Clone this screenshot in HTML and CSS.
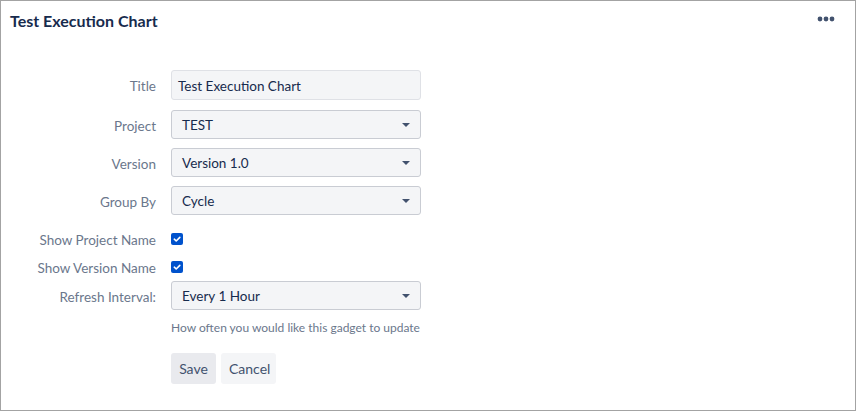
FILE: index.html
```html
<!DOCTYPE html>
<html>
<head>
<meta charset="utf-8">
<link rel="stylesheet" href="styles.css">
</head>
<body>
<div class="gadget">
  <div class="header">
    <h1 class="title">Test Execution Chart</h1>
    <svg class="more" width="18" height="6" viewBox="0 0 18 6"><circle cx="3" cy="3" r="2.4"/><circle cx="9" cy="3" r="2.4"/><circle cx="15" cy="3" r="2.4"/></svg>
  </div>
  <form class="form">
    <div class="row r-title">
      <label class="label">Title</label>
      <div class="field text-field">Test Execution Chart</div>
    </div>
    <div class="row r-sel">
      <label class="label">Project</label>
      <div class="field select">TEST<span class="caret"></span></div>
    </div>
    <div class="row r-sel">
      <label class="label">Version</label>
      <div class="field select">Version 1.0<span class="caret"></span></div>
    </div>
    <div class="row r-sel r-group">
      <label class="label">Group By</label>
      <div class="field select">Cycle<span class="caret"></span></div>
    </div>
    <div class="row r-check">
      <label class="label">Show Project Name</label>
      <span class="check"><svg width="12" height="12" viewBox="0 0 12 12"><path d="M3.3 6.2 L5.2 8 L8.8 4.4" fill="none" stroke="#fff" stroke-width="1.6" stroke-linecap="round" stroke-linejoin="round"/></svg></span>
    </div>
    <div class="row r-check r-check2">
      <label class="label">Show Version Name</label>
      <span class="check"><svg width="12" height="12" viewBox="0 0 12 12"><path d="M3.3 6.2 L5.2 8 L8.8 4.4" fill="none" stroke="#fff" stroke-width="1.6" stroke-linecap="round" stroke-linejoin="round"/></svg></span>
    </div>
    <div class="row r-sel r-refresh">
      <label class="label">Refresh Interval:</label>
      <div class="field select">Every 1 Hour<span class="caret"></span></div>
    </div>
    <div class="row r-help">
      <span class="label"></span>
      <div class="help">How often you would like this gadget to update</div>
    </div>
    <div class="row r-buttons">
      <span class="label"></span>
      <div class="buttons">
        <button type="button" class="btn btn-save">Save</button>
        <button type="button" class="btn btn-cancel">Cancel</button>
      </div>
    </div>
  </form>
</div>
</body>
</html>
```
FILE: styles.css
```css
* { box-sizing: border-box; }
html, body { margin: 0; padding: 0; background: #fff; }
body { font-family: "Lato", "Liberation Sans", sans-serif; }

.gadget {
  width: 856px;
  height: 411px;
  border: 1px solid #a3a3a3;
  background: #fff;
}

.header {
  height: 38px;
  padding: 0 20px 0 9px;
  display: flex;
  align-items: center;
  justify-content: space-between;
}
.title {
  margin: 0;
  font-size: 16px;
  font-weight: 700;
  color: #172b4d;
}
.more { fill: #42526e; margin-top: -2px; }

.form {
  padding-top: 31px;
  display: flex;
  flex-direction: column;
}
.row {
  display: grid;
  grid-template-columns: 155px 250px;
  column-gap: 15px;
  align-items: center;
}
.label {
  text-align: right;
  font-size: 13.5px;
  color: #6b778c;
  padding-top: 2px;
}
.field {
  height: 30px;
  background: #f4f5f7;
  border: 1px solid #dfe1e6;
  border-radius: 3px;
  font-size: 13.5px;
  color: #172b4d;
  display: flex;
  align-items: center;
  padding: 1px 6px 0;
}
.select {
  height: 29px;
  border-color: #c9ccd3;
  padding: 1px 10px 0;
  position: relative;
}
.caret {
  position: absolute;
  right: 10px;
  top: 12px;
  width: 0; height: 0;
  border-left: 4px solid transparent;
  border-right: 4px solid transparent;
  border-top: 4px solid #42526e;
}
.r-title { margin-bottom: 10px; }
.r-sel { margin-bottom: 9px; }
.r-group { margin-bottom: 10px; }
.r-check { height: 28px; }
.r-check2 { margin-bottom: 0; }
.r-refresh { margin-bottom: 7px; }
.check {
  width: 12px; height: 12px;
  border-radius: 2px;
  background: #0052cc;
  display: block;
}
.check svg { display: block; }
.r-help { height: 20px; margin-bottom: 16px; }
.help {
  font-size: 12px;
  color: #6b778c;
  white-space: nowrap;
}
.buttons { display: flex; gap: 5px; }
.btn {
  height: 31px;
  border: none;
  border-radius: 3px;
  font-family: inherit;
  font-size: 14px;
  color: #42526e;
  padding: 0 8px;
  cursor: pointer;
}
.btn-save { background: #e9eaee; width: 45px; }
.btn-cancel { background: #f4f5f7; width: 55px; }
```
